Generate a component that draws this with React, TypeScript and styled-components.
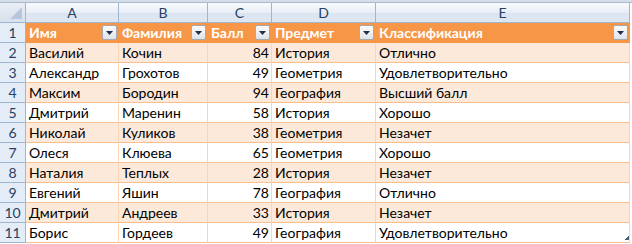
import { FC } from "react";
import styled, { createGlobalStyle } from "styled-components";

const GlobalStyle = createGlobalStyle`
  html, body {
    margin: 0;
    padding: 0;
    background: #ffffff;
  }
  body {
    font-family: "Lato", "Open Sans", sans-serif;
  }
`;

const columns = ["A", "B", "C", "D", "E"];
const headers = ["Имя", "Фамилия", "Балл", "Предмет", "Классификация"];

const rows: [string, string, number, string, string][] = [
  ["Василий", "Кочин", 84, "История", "Отлично"],
  ["Александр", "Грохотов", 49, "Геометрия", "Удовлетворительно"],
  ["Максим", "Бородин", 94, "География", "Высший балл"],
  ["Дмитрий", "Маренин", 58, "История", "Хорошо"],
  ["Николай", "Куликов", 38, "Геометрия", "Незачет"],
  ["Олеся", "Клюева", 65, "Геометрия", "Хорошо"],
  ["Наталия", "Теплых", 28, "История", "Незачет"],
  ["Евгений", "Яшин", 78, "География", "Отлично"],
  ["Дмитрий", "Андреев", 33, "История", "Незачет"],
  ["Борис", "Гордеев", 49, "География", "Удовлетворительно"],
];

export default function App() {
  return (
    <>
      <GlobalStyle />
      <Sheet>
        <TopStrip />
        <Grid>
          <Corner>
            <svg width="12" height="12" viewBox="0 0 12 12">
              <polygon points="12,0 12,12 0,12" fill="#b7c6dc" />
            </svg>
          </Corner>
          {columns.map((c) => (
            <ColHead key={c}>{c}</ColHead>
          ))}

          <RowHead>1</RowHead>
          {headers.map((h) => (
            <HeadCell key={h}>
              <span>{h}</span>
              <FilterButton />
            </HeadCell>
          ))}

          {rows.map((r, i) => (
            <DataRow key={i} row={r} index={i} />
          ))}
        </Grid>
        <ResizeGrip />
      </Sheet>
    </>
  );
}

const DataRow: FC<{ row: [string, string, number, string, string]; index: number }> = ({
  row,
  index,
}) => {
  const banded = index % 2 === 0;
  return (
    <>
      <RowHead>{index + 2}</RowHead>
      <Cell $banded={banded}>{row[0]}</Cell>
      <Cell $banded={banded}>{row[1]}</Cell>
      <Cell $banded={banded} $right>
        {row[2]}
      </Cell>
      <Cell $banded={banded}>{row[3]}</Cell>
      <Cell $banded={banded}>{row[4]}</Cell>
    </>
  );
};

const FilterButton: FC = () => (
  <Filter>
    <svg width="7" height="4" viewBox="0 0 7 4">
      <polygon points="0,0 7,0 3.5,4" fill="#1f2f4a" />
    </svg>
  </Filter>
);

const Sheet = styled.div`
  position: relative;
  width: 632px;
  height: 244px;
  overflow: hidden;
  background: #ffffff;
`;

const TopStrip = styled.div`
  height: 3px;
  background: #d5dde9;
  border-bottom: 1px solid #aabbd0;
  box-sizing: border-box;
`;

const Grid = styled.div`
  display: grid;
  grid-template-columns: 26px 93px 89px 64px 104px 254px;
  grid-auto-rows: 20px;
`;

const Corner = styled.div`
  box-sizing: border-box;
  display: flex;
  align-items: flex-end;
  justify-content: flex-end;
  padding: 0 3px 3px 0;
  background: linear-gradient(#e9eef6, #d7e0ec);
  border-right: 1px solid #9eb6ce;
  border-bottom: 1px solid #9eb6ce;
`;

const ColHead = styled.div`
  box-sizing: border-box;
  display: flex;
  align-items: center;
  justify-content: center;
  background: linear-gradient(#f8fafd 0%, #e8eef7 50%, #dbe4f0 51%, #dfe7f2 100%);
  border-right: 1px solid #9eb6ce;
  border-bottom: 1px solid #9eb6ce;
  color: #27415f;
  font-size: 14px;
`;

const RowHead = styled.div`
  box-sizing: border-box;
  display: flex;
  align-items: center;
  justify-content: center;
  background: #e4ecf7;
  border-right: 1px solid #9eb6ce;
  border-bottom: 1px solid #9eb6ce;
  color: #27415f;
  font-size: 14px;
`;

const HeadCell = styled.div`
  box-sizing: border-box;
  display: flex;
  align-items: center;
  justify-content: space-between;
  padding: 0 1px 0 3px;
  background: #f79646;
  border-right: 1px solid #f79646;
  border-bottom: 1px solid #f79646;
  color: #ffffff;
  font-weight: 700;
  font-size: 14px;
  white-space: nowrap;
`;

const Filter = styled.div`
  box-sizing: border-box;
  width: 15px;
  height: 15px;
  display: flex;
  align-items: center;
  justify-content: center;
  border: 1px solid #a5a9b2;
  border-radius: 2px;
  background: linear-gradient(#fbfbfc, #dfe3ea);
`;

const Cell = styled.div<{ $banded: boolean; $right?: boolean }>`
  box-sizing: border-box;
  display: flex;
  align-items: center;
  justify-content: ${(p) => (p.$right ? "flex-end" : "flex-start")};
  padding: ${(p) => (p.$right ? "0 2px 0 0" : "0 0 0 3px")};
  background: ${(p) => (p.$banded ? "#fde9d9" : "#ffffff")};
  border-right: 1px solid #fbd4b4;
  border-bottom: 1px solid #fabf8f;
  color: #000000;
  font-size: 14px;
  white-space: nowrap;
`;

const ResizeGrip = styled.div`
  position: absolute;
  right: 3px;
  bottom: 4px;
  width: 4px;
  height: 4px;
  background: linear-gradient(135deg, transparent 50%, #4a5f7e 50%);
`;
